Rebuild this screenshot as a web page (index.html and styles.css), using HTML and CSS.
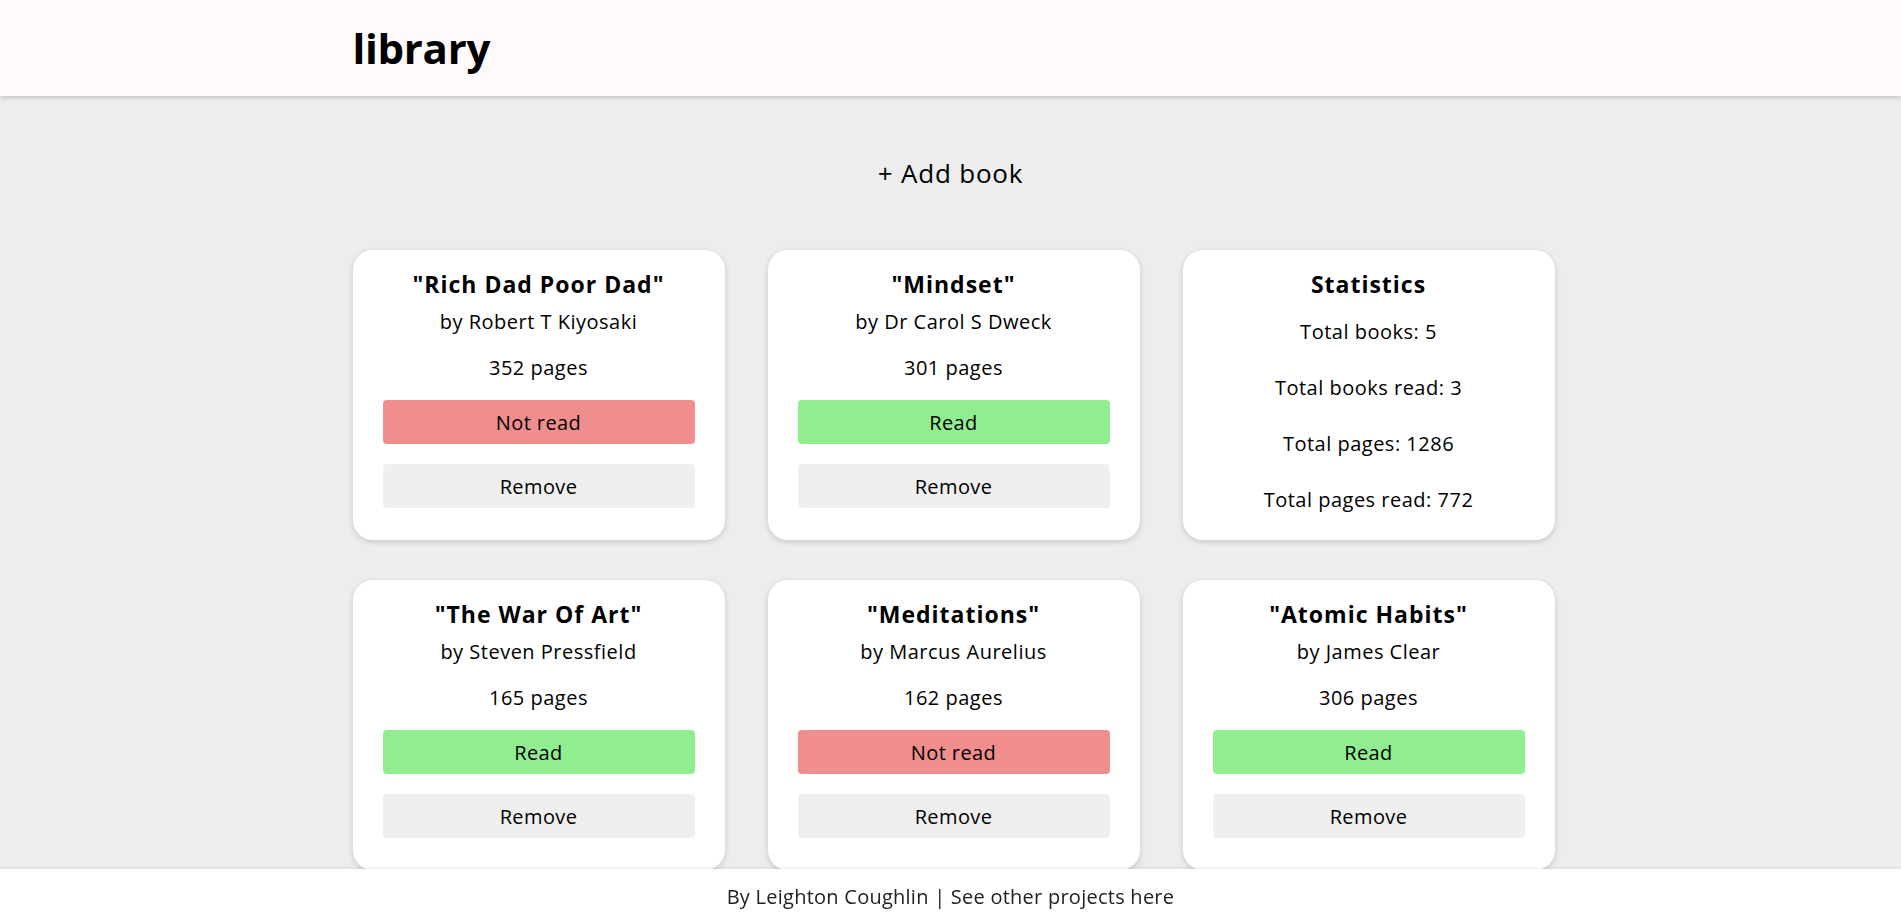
FILE: index.html
```html
<!DOCTYPE html>
<html lang="en">
<head>
<meta charset="utf-8">
<title>library</title>
<link rel="stylesheet" href="styles.css">
</head>
<body>
<header class="site-header">
  <div class="container">
    <h1 class="logo">library</h1>
  </div>
</header>
<main class="main">
  <div class="add-row">
    <button class="add-btn">+ Add book</button>
  </div>
  <div class="container grid">
    <div class="card">
      <h2 class="card-title">"Rich Dad Poor Dad"</h2>
      <p class="author">by Robert T Kiyosaki</p>
      <p class="pages">352 pages</p>
      <button class="btn status not-read">Not read</button>
      <button class="btn remove">Remove</button>
    </div>
    <div class="card">
      <h2 class="card-title">"Mindset"</h2>
      <p class="author">by Dr Carol S Dweck</p>
      <p class="pages">301 pages</p>
      <button class="btn status read">Read</button>
      <button class="btn remove">Remove</button>
    </div>
    <div class="card stats">
      <h2 class="card-title">Statistics</h2>
      <p class="stat">Total books: 5</p>
      <p class="stat">Total books read: 3</p>
      <p class="stat">Total pages: 1286</p>
      <p class="stat">Total pages read: 772</p>
    </div>
    <div class="card">
      <h2 class="card-title">"The War Of Art"</h2>
      <p class="author">by Steven Pressfield</p>
      <p class="pages">165 pages</p>
      <button class="btn status read">Read</button>
      <button class="btn remove">Remove</button>
    </div>
    <div class="card">
      <h2 class="card-title">"Meditations"</h2>
      <p class="author">by Marcus Aurelius</p>
      <p class="pages">162 pages</p>
      <button class="btn status not-read">Not read</button>
      <button class="btn remove">Remove</button>
    </div>
    <div class="card">
      <h2 class="card-title">"Atomic Habits"</h2>
      <p class="author">by James Clear</p>
      <p class="pages">306 pages</p>
      <button class="btn status read">Read</button>
      <button class="btn remove">Remove</button>
    </div>
  </div>
</main>
<footer class="site-footer">
  <p class="footer-text">By Leighton Coughlin | See other projects here</p>
</footer>
</body>
</html>
```

FILE: styles.css
```css
* { box-sizing: border-box; }

html, body {
  margin: 0;
  padding: 0;
}

body {
  font-family: "Open Sans", "Noto Sans", sans-serif;
  background: #ededed;
  color: #000;
  min-height: 100vh;
  overflow: hidden;
}

.container {
  width: 1202px;
  margin-left: calc(50% - 598px);
}

.site-header {
  background: #fffafa;
  height: 96px;
  display: flex;
  align-items: center;
  box-shadow: 0 2px 4px rgba(0, 0, 0, 0.16);
  position: relative;
  z-index: 2;
}

.logo {
  margin: 0;
  font-size: 42px;
  line-height: 48px;
  font-weight: 700;
  letter-spacing: -0.3px;
}

.main {
  padding-top: 61px;
}

.add-row {
  display: flex;
  justify-content: center;
}

.add-btn {
  font-family: inherit;
  font-size: 26px;
  line-height: 32px;
  font-weight: 500;
  letter-spacing: 0.8px;
  background: none;
  border: none;
  padding: 0;
  color: #000;
  cursor: pointer;
}

.grid {
  margin-top: 61px;
  display: grid;
  grid-template-columns: repeat(3, 372px);
  column-gap: 43px;
  row-gap: 40px;
}

.card {
  background: #fff;
  border-radius: 20px;
  box-shadow: 0 2px 6px rgba(0, 0, 0, 0.16);
  padding: 20px 30px 32px;
  display: flex;
  flex-direction: column;
  align-items: stretch;
  text-align: center;
  height: 290px;
}

.card-title {
  margin: 0;
  font-size: 23px;
  line-height: 28px;
  font-weight: 700;
  letter-spacing: 1px;
}

.author {
  margin: 12px 0 0;
  font-size: 20px;
  line-height: 24px;
  letter-spacing: 0.5px;
}

.pages {
  margin: 22px 0 0;
  font-size: 20px;
  line-height: 24px;
  letter-spacing: 0.5px;
}

.btn {
  font-family: inherit;
  font-size: 20px;
  letter-spacing: 0.4px;
  height: 44px;
  border: none;
  border-radius: 4px;
  color: #000;
  cursor: pointer;
}

.status { margin-top: 20px; }
.remove { margin-top: 20px; background: #efefef; }
.read { background: #90ee90; }
.not-read { background: #f08e8e; }

.stat {
  margin: 32px 0 0;
  font-size: 20px;
  line-height: 24px;
  letter-spacing: 0.5px;
}
.stat:first-of-type { margin-top: 22px; }

.site-footer {
  position: fixed;
  left: 0;
  right: 0;
  bottom: 0;
  height: 54px;
  background: #fff;
  display: flex;
  align-items: center;
  justify-content: center;
  box-shadow: 0 -1px 3px rgba(0, 0, 0, 0.08);
  z-index: 3;
}

.footer-text {
  margin: 0;
  font-size: 20px;
  letter-spacing: 0.25px;
  color: #222;
}
```
